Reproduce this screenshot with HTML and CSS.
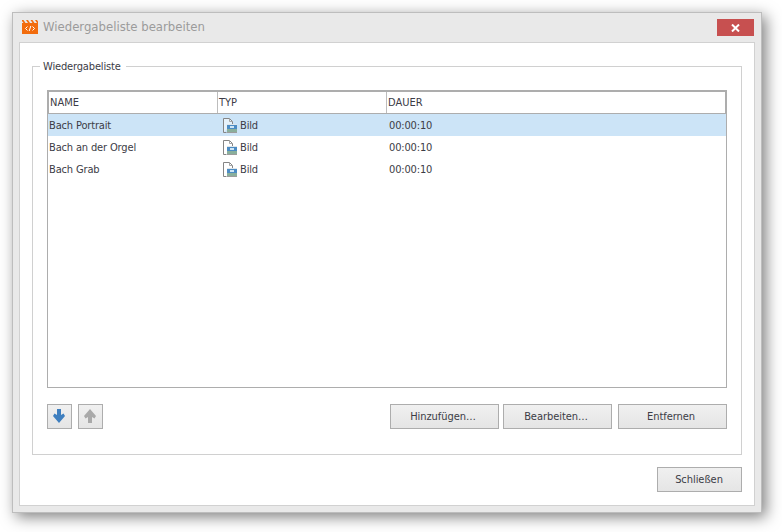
FILE: index.html
```html
<!DOCTYPE html>
<html lang="de">
<head>
<meta charset="utf-8">
<title>Wiedergabeliste bearbeiten</title>
<link rel="stylesheet" href="styles.css">
</head>
<body>
<div class="window">
  <div class="titlebar">
    <svg class="app-icon" width="16" height="15" viewBox="0 0 16 15">
      <rect x="0" y="3" width="16" height="11" fill="#f26c0d"/>
      <path d="M0 0h1.500l2 3H1.500L0 1zM4 0h2l2 3H6zM8.500 0h2l2 3h-2zM13 0h2l1 1.500V3h-1z" fill="#f26c0d"/>
      <path d="M5.500 6.500l-2 2 2 2M10.500 6.500l2 2-2 2M8.800 6l-1.600 5" fill="none" stroke="#fff" stroke-width="1"/>
    </svg>
    <span class="title">Wiedergabeliste bearbeiten</span>
    <button class="close" type="button" aria-label="Schließen">
      <svg width="9" height="8" viewBox="0 0 9 8"><path d="M1 0.500l7 7M8 0.500l-7 7" stroke="#fff" stroke-width="2" fill="none"/></svg>
    </button>
  </div>
  <div class="content">
    <fieldset class="group">
      <legend class="group-label">Wiedergabeliste</legend>
      <div class="table">
        <div class="thead">
          <div class="th col-name">NAME</div>
          <div class="th col-type">TYP</div>
          <div class="th col-dur">DAUER</div>
        </div>
        <div class="row selected">
          <div class="td col-name">Bach Portrait</div>
          <div class="td col-type"><svg class="file-icon" width="14" height="16" viewBox="0 0 14 16"><use href="#img"/></svg>Bild</div>
          <div class="td col-dur">00:00:10</div>
        </div>
        <div class="row">
          <div class="td col-name">Bach an der Orgel</div>
          <div class="td col-type"><svg class="file-icon" width="14" height="16" viewBox="0 0 14 16"><use href="#img"/></svg>Bild</div>
          <div class="td col-dur">00:00:10</div>
        </div>
        <div class="row">
          <div class="td col-name">Bach Grab</div>
          <div class="td col-type"><svg class="file-icon" width="14" height="16" viewBox="0 0 14 16"><use href="#img"/></svg>Bild</div>
          <div class="td col-dur">00:00:10</div>
        </div>
      </div>
      <div class="actions">
        <button class="btn icon-btn" type="button" aria-label="Nach unten">
          <svg width="12" height="14" viewBox="0 0 12 14"><path d="M4 0h4v6l2.500-1.500L12 7l-6 7-6-7 1.500-2.500L4 6z" fill="#3f7fbf"/></svg>
        </button>
        <button class="btn icon-btn" type="button" aria-label="Nach oben">
          <svg width="12" height="14" viewBox="0 0 12 14"><path d="M4 14h4V8l2.500 1.500L12 7 6 0 0 7l1.500 2.500L4 8z" fill="#a9a9a9"/></svg>
        </button>
        <div class="spacer"></div>
        <button class="btn text-btn" type="button">Hinzufügen…</button>
        <button class="btn text-btn" type="button">Bearbeiten…</button>
        <button class="btn text-btn" type="button">Entfernen</button>
      </div>
    </fieldset>
    <div class="footer">
      <button class="btn close-btn" type="button">Schließen</button>
    </div>
  </div>
</div>
<svg class="defs" width="0" height="0">
  <symbol id="img" viewBox="0 0 14 16">
    <path d="M0.500 15.500V1.500h6l3 3v2.500" fill="#fff" fill-opacity="0.5" stroke="#858585"/>
    <path d="M0.500 15.500h3" stroke="#858585" fill="none"/>
    <path d="M6.500 1.500v3h3" fill="none" stroke="#a5a5a5"/>
    <rect x="4" y="7" width="10" height="9" fill="#dfe6ea"/>
    <rect x="4" y="8" width="10" height="4" fill="#4c8cc4"/>
    <rect x="4" y="12" width="10" height="3" fill="#8aaf9c"/>
    <rect x="7" y="9" width="4" height="2" fill="#cfe6f5"/>
    <rect x="4" y="15" width="10" height="1" fill="#9c9c9c"/>
  </symbol>
</svg>
</body>
</html>
```
FILE: styles.css
```css
* {
  box-sizing: border-box;
}

html,
body {
  height: 100%;
}

body {
  margin: 0;
  padding: 12px 0 0 12px;
  background: #fff;
  font-family: "DejaVu Sans Condensed", "DejaVu Sans", sans-serif;
  font-stretch: condensed;
  color: #3c3c46;
  overflow: hidden;
}

.window {
  width: 750px;
  height: 501px;
  display: flex;
  flex-direction: column;
  background: #e9e9e9;
  border: 1px solid #bdbdbd;
  box-shadow: 4px 4px 14px rgba(0, 0, 0, 0.5);
}

.titlebar {
  height: 29px;
  flex: none;
  display: flex;
  align-items: center;
  padding: 0 7px 0 9px;
}

.app-icon {
  margin-right: 5px;
  flex: none;
}

.title {
  flex: 1;
  padding-bottom: 2px;
  font-size: 13px;
  color: #9b9b9b;
  white-space: nowrap;
}

.close {
  width: 37px;
  height: 17px;
  border: 0;
  padding: 0;
  background: #c75050;
  display: flex;
  align-items: center;
  justify-content: center;
}

.content {
  flex: 1;
  margin: 0 6px 6px;
  background: #fff;
  border: 1px solid #d1d1d1;
  padding: 15px 12px 0 12px;
  display: flex;
  flex-direction: column;
}

.group {
  margin: 0;
  height: 397px;
  padding: 16px 14px 0 14px;
  border: 1px solid #d0d0d0;
  min-width: 0;
  flex: none;
}

.group-label {
  position: relative;
  top: 1px;
  margin-left: -7px;
  padding: 0 5px 0 3px;
  font-size: 11px;
  line-height: 16px;
  letter-spacing: -0.15px;
  color: #3c3c46;
}

.table {
  height: 298px;
  border: 1px solid #adadad;
  font-size: 11px;
  line-height: 15px;
}

.thead {
  height: 23px;
  display: flex;
  align-items: stretch;
  border: 1px solid #adadad;
}

.th {
  display: flex;
  align-items: center;
  padding-left: 1px;
  border-right: 1px solid #bdbdbd;
}

.th.col-dur {
  border-right: 0;
}

.col-name {
  width: 169px;
  flex: none;
}

.col-type {
  width: 169px;
  flex: none;
}

.col-dur {
  flex: 1;
}

.row {
  height: 22px;
  display: flex;
  align-items: center;
}

.row.selected {
  background: #cce4f7;
}

.td {
  padding-left: 1px;
  letter-spacing: -0.15px;
}

.td.col-name {
  width: 170px;
}

.td.col-type {
  width: 170px;
  display: flex;
  align-items: center;
  padding-left: 5px;
}

.file-icon {
  margin-right: 3px;
  flex: none;
}

.actions {
  margin-top: 16px;
  display: flex;
  align-items: flex-start;
}

.spacer {
  flex: 1;
}

.btn {
  height: 25px;
  padding: 0;
  border: 1px solid #adadad;
  background: linear-gradient(#f0f0f0, #e5e5e5);
  font-family: inherit;
  font-stretch: inherit;
  font-size: 11px;
  letter-spacing: -0.05px;
  color: #3c3c46;
  display: flex;
  align-items: center;
  justify-content: center;
}

.icon-btn {
  width: 25px;
  margin-right: 6px;
  padding: 0 1px 1px 0;
}

.text-btn {
  width: 109px;
  margin-left: 4px;
  padding-right: 3px;
}

.text-btn:last-child {
  margin-left: 6px;
}

.footer {
  margin-top: 12px;
  display: flex;
  justify-content: flex-end;
}

.close-btn {
  width: 85px;
  padding-right: 1px;
}

.defs {
  position: absolute;
}
```
